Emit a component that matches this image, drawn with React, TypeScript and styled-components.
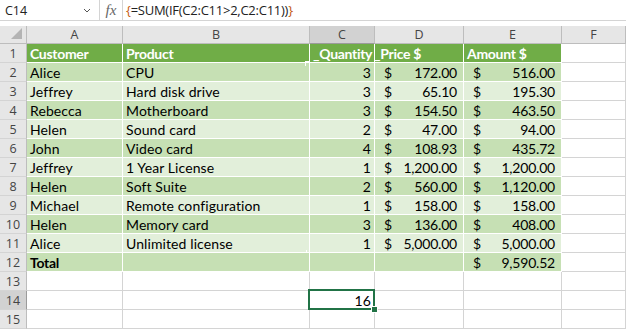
import React from 'react';
import styled, {createGlobalStyle, css} from "styled-components";

const GlobalStyle = createGlobalStyle`
    html, body {
        margin: 0;
        padding: 0;
        background: #ffffff;
    }
    body {
        width: 626px;
        height: 330px;
        overflow: hidden;
    }
`

type Row = [string, string, string, string, string]

const rows: Row[] = [
    ['Alice', 'CPU', '3', '172.00', '516.00'],
    ['Jeffrey', 'Hard disk drive', '3', '65.10', '195.30'],
    ['Rebecca', 'Motherboard', '3', '154.50', '463.50'],
    ['Helen', 'Sound card', '2', '47.00', '94.00'],
    ['John', 'Video card', '4', '108.93', '435.72'],
    ['Jeffrey', '1 Year License', '1', '1,200.00', '1,200.00'],
    ['Helen', 'Soft Suite', '2', '560.00', '1,120.00'],
    ['Michael', 'Remote configuration', '1', '158.00', '158.00'],
    ['Helen', 'Memory card', '3', '136.00', '408.00'],
    ['Alice', 'Unlimited license', '1', '5,000.00', '5,000.00'],
]

const columns = ['A', 'B', 'C', 'D', 'E', 'F']

type Tone = 'head' | 'dark' | 'light' | 'plain'

const App = () => {
    return (
        <>
            <GlobalStyle/>
            <Window>
                <FormulaBar>
                    <NameBox>
                        <span>C14</span>
                        <svg width="8" height="5" viewBox="0 0 8 5">
                            <path d="M1 1 L4 4 L7 1" fill="none" stroke="#555" strokeWidth="1"/>
                        </svg>
                    </NameBox>
                    <FxBox>fx</FxBox>
                    <FormulaText>
                        <Brace>{'{'}</Brace>=SUM(IF(C2:C11&gt;2,C2:C11))<Brace>{'}'}</Brace>
                    </FormulaText>
                </FormulaBar>
                <Gap/>
                <Sheet>
                    <Corner>
                        <svg width="12" height="12" viewBox="0 0 12 12">
                            <polygon points="11,0 11,11 0,11" fill="#b4b4b4"/>
                        </svg>
                    </Corner>
                    {columns.map(c => (
                        <ColHeader key={c} selected={c === 'C'}>{c}</ColHeader>
                    ))}

                    <RowHeader>1</RowHeader>
                    <Cell tone="head" bold>Customer</Cell>
                    <Cell tone="head" bold>Product</Cell>
                    <Cell tone="head" bold>_Quantity</Cell>
                    <Cell tone="head" bold><Nudge>_</Nudge>Price $</Cell>
                    <Cell tone="head" bold>Amount $</Cell>
                    <Cell tone="plain"/>

                    {rows.map((r, i) => {
                        const tone: Tone = i % 2 === 0 ? 'dark' : 'light'
                        return (
                            <React.Fragment key={i}>
                                <RowHeader>{i + 2}</RowHeader>
                                <Cell tone={tone}>{r[0]}</Cell>
                                <Cell tone={tone} marker={i === 0 ? 'corner' : i === 9 ? 'plus' : undefined}>{r[1]}</Cell>
                                <Cell tone={tone} align="right">{r[2]}</Cell>
                                <Money tone={tone}><span>$</span><span>{r[3]}</span></Money>
                                <Money tone={tone}><span>$</span><span>{r[4]}</span></Money>
                                <Cell tone="plain"/>
                            </React.Fragment>
                        )
                    })}

                    <RowHeader>12</RowHeader>
                    <Cell tone="dark" bold>Total</Cell>
                    <Cell tone="dark"/>
                    <Cell tone="dark"/>
                    <Cell tone="dark"/>
                    <Money tone="dark"><span>$</span><span>9,590.52</span></Money>
                    <Cell tone="plain"/>

                    {[13, 14, 15].map(n => (
                        <React.Fragment key={n}>
                            <RowHeader selected={n === 14}>{n}</RowHeader>
                            <Cell tone="plain"/>
                            <Cell tone="plain"/>
                            <Cell tone="plain" align="right" active={n === 14}>{n === 14 ? '16' : ''}</Cell>
                            <Cell tone="plain"/>
                            <Cell tone="plain"/>
                            <Cell tone="plain"/>
                        </React.Fragment>
                    ))}
                </Sheet>
            </Window>
        </>
    );
};

export default App;

const uiFont = `"Open Sans", "Noto Sans", sans-serif`
const cellFont = `Lato, "Liberation Sans", sans-serif`

const Window = styled.div`
    width: 626px;
    height: 330px;
    background: #ffffff;
    overflow: hidden;
    display: flex;
    flex-direction: column;
`

const FormulaBar = styled.div`
    height: 21px;
    box-sizing: border-box;
    display: flex;
    align-items: center;
    border-bottom: 1px solid #d4d4d4;
    font-family: ${uiFont};
    font-size: 12.5px;
    color: #222;
`

const NameBox = styled.div`
    width: 100px;
    height: 100%;
    box-sizing: border-box;
    border-right: 1px solid #d4d4d4;
    display: flex;
    align-items: center;
    justify-content: space-between;
    padding: 0 8px 0 5px;
`

const FxBox = styled.div`
    width: 23px;
    height: 100%;
    box-sizing: border-box;
    border-right: 1px solid #d4d4d4;
    display: flex;
    align-items: center;
    justify-content: center;
    font-family: "Liberation Serif", serif;
    font-style: italic;
    font-size: 15px;
    color: #666;
`

const FormulaText = styled.div`
    padding-left: 3px;
    white-space: nowrap;
    font-size: 13px;
    letter-spacing: -0.25px;
`

const Brace = styled.span`
    color: #c55a11;
`

const Gap = styled.div`
    height: 5px;
`

const Sheet = styled.div`
    display: grid;
    grid-template-columns: 27px 96px 187px 65px 89px 98px 64px;
    grid-template-rows: 18px repeat(15, 19px);
`

const Corner = styled.div`
    background: #e6e6e6;
    border-right: 1px solid #bdbdbd;
    border-bottom: 1px solid #bdbdbd;
    box-sizing: border-box;
    display: flex;
    align-items: flex-end;
    justify-content: flex-end;
    padding: 0 3px 3px 0;
`

const ColHeader = styled.div<{ selected?: boolean }>`
    background: ${p => p.selected ? '#d2d2d2' : '#e6e6e6'};
    border-right: 1px solid #bdbdbd;
    border-bottom: 1px solid ${p => p.selected ? '#9b9b9b' : '#bdbdbd'};
    box-sizing: border-box;
    display: flex;
    align-items: center;
    justify-content: center;
    font-family: ${uiFont};
    font-size: 12.5px;
    color: #444;
`

const RowHeader = styled.div<{ selected?: boolean }>`
    background: ${p => p.selected ? '#d2d2d2' : '#e6e6e6'};
    border-right: 1px solid ${p => p.selected ? '#9b9b9b' : '#bdbdbd'};
    border-bottom: 1px solid #d4d4d4;
    box-sizing: border-box;
    display: flex;
    align-items: center;
    justify-content: center;
    font-family: ${uiFont};
    font-size: 12.5px;
    color: #444;
`

const toneBg: Record<Tone, string> = {
    head: '#70ad47',
    dark: '#c6e0b4',
    light: '#e2efda',
    plain: '#ffffff',
}

const Cell = styled.div<{ tone: Tone; bold?: boolean; align?: 'left' | 'right'; active?: boolean; marker?: 'corner' | 'plus' }>`
    position: relative;
    background: ${p => toneBg[p.tone]};
    color: ${p => p.tone === 'head' ? '#ffffff' : '#000000'};
    border-right: 1px solid ${p => p.tone === 'plain' ? '#d4d4d4' : '#ffffff'};
    border-bottom: 1px solid ${p => p.tone === 'plain' ? '#d4d4d4' : '#ffffff'};
    box-sizing: border-box;
    display: flex;
    align-items: center;
    justify-content: ${p => p.align === 'right' ? 'flex-end' : 'flex-start'};
    padding: 1px 3px 0 3px;
    font-family: ${cellFont};
    font-size: 14px;
    font-weight: ${p => p.bold ? 700 : 400};
    letter-spacing: ${p => p.bold ? '-0.3px' : '0.1px'};
    white-space: nowrap;

    ${p => p.active && css`
        &::after {
            content: "";
            position: absolute;
            left: -2px;
            top: -2px;
            right: -1px;
            bottom: -1px;
            border: 2px solid #217346;
        }
        &::before {
            content: "";
            position: absolute;
            right: -4px;
            bottom: -4px;
            width: 5px;
            height: 5px;
            background: #217346;
            border: 1px solid #ffffff;
            z-index: 1;
        }
    `}

    ${p => p.marker === 'corner' && css`
        &::after {
            content: "";
            position: absolute;
            right: -1px;
            top: -2px;
            width: 4px;
            height: 4px;
            border-top: 1px solid #ffffff;
            border-left: 1px solid #ffffff;
        }
    `}

    ${p => p.marker === 'plus' && css`
        &::after {
            content: "";
            position: absolute;
            right: 2px;
            bottom: -3px;
            width: 1px;
            height: 5px;
            background: #ffffff;
        }
    `}
`

const Money = styled(Cell)`
    justify-content: space-between;
    padding: 1px 6px 0 9px;
    letter-spacing: -0.2px;
`

const Nudge = styled.span`
    margin-left: -4px;
`
